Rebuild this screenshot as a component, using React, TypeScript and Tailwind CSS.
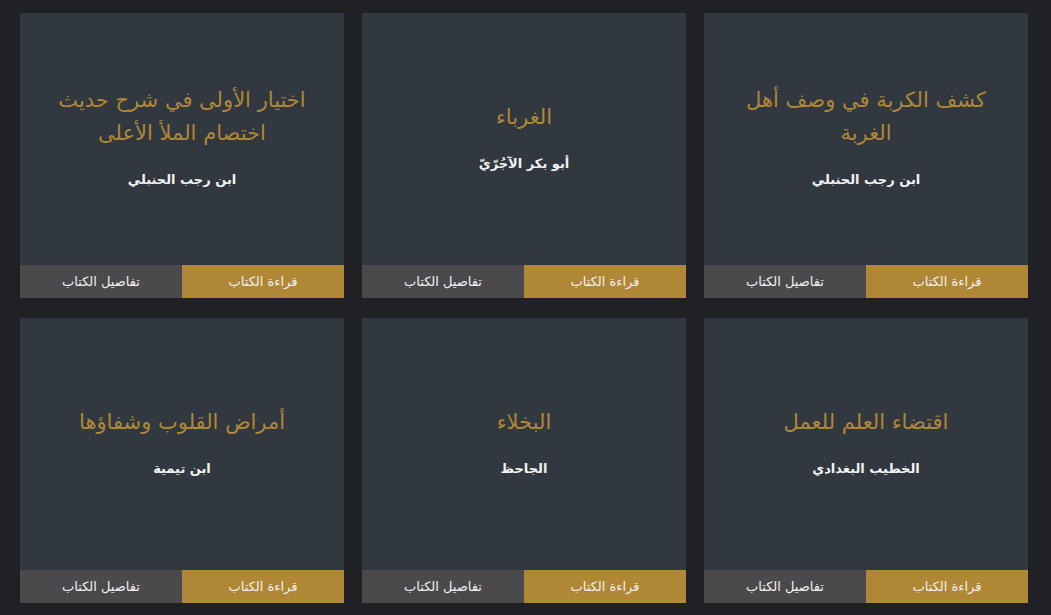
const books = [
  { title: 'كشف الكربة في وصف أهل الغربة', author: 'ابن رجب الحنبلي' },
  { title: 'الغرباء', author: 'أبو بكر الآجُرّيّ' },
  { title: 'اختيار الأولى في شرح حديث اختصام الملأ الأعلى', author: 'ابن رجب الحنبلي' },
  { title: 'اقتضاء العلم للعمل', author: 'الخطيب البغدادي' },
  { title: 'البخلاء', author: 'الجاحظ' },
  { title: 'أمراض القلوب وشفاؤها', author: 'ابن تيمية' },
]

function BookCard({ title, author }: { title: string; author: string }) {
  return (
    <div className="flex h-[285px] flex-col bg-[#32383f]">
      <div className="flex flex-1 flex-col items-center justify-center px-6 pb-1 text-center">
        <h2 className="text-[21px] leading-[33px] text-[#b08734]">{title}</h2>
        <p className="mt-5 text-[13px] font-bold text-[#f2f2f2]">{author}</p>
      </div>
      <div className="grid h-[33px] grid-cols-2 text-[13px] text-[#f0f0f0]">
        <button className="bg-[#b08734]">قراءة الكتاب</button>
        <button className="bg-[#4a4a4c]">تفاصيل الكتاب</button>
      </div>
    </div>
  )
}

export default function App() {
  return (
    <div
      dir="rtl"
      className="min-h-screen bg-[#1f2125] pr-[23px] pt-[13px]"
      style={{ fontFamily: '"DejaVu Sans", "Noto Sans", sans-serif' }}
    >
      <div className="grid grid-cols-[repeat(3,324px)] gap-x-[18px] gap-y-5">
        {books.map((b) => (
          <BookCard key={b.title} {...b} />
        ))}
      </div>
    </div>
  )
}
